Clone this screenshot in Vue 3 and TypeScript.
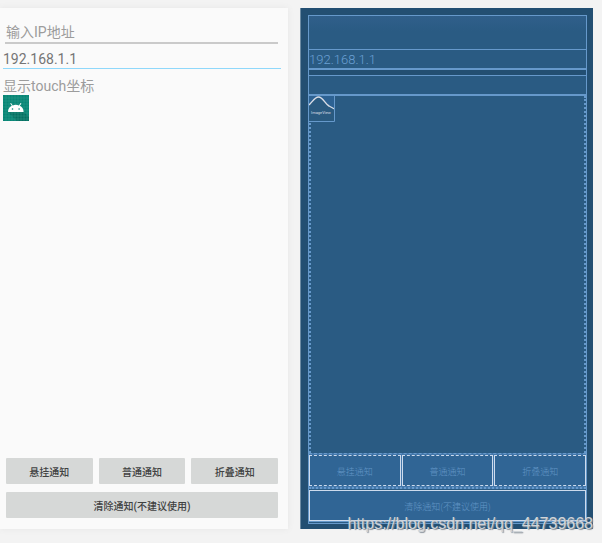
<script setup lang="ts">
import { ref } from 'vue'

const hint = ref('')
const address = ref('192.168.1.1')
const notices: string[] = ['悬挂通知', '普通通知', '折叠通知']
const clearLabel = '清除通知(不建议使用)'
const gridLines: number[] = [3, 6, 9, 12, 15, 18, 21, 24]
</script>

<template>
  <main class="editor">
    <section class="design" aria-label="Design">
      <input v-model="hint" class="field hint" type="text" placeholder="输入IP地址" aria-label="输入IP地址" />
      <input v-model="address" class="field address" type="text" aria-label="IP" />
      <p class="coords">显示touch坐标</p>
      <svg class="launcher" viewBox="0 0 26 26" aria-hidden="true">
        <rect width="26" height="26" fill="#078575" />
        <path d="M5 17 H20.500 L26 22 V26 H14 Z" fill="#04685b" opacity="0.750" />
        <g stroke="#39a091" stroke-width="0.400">
          <path v-for="n in gridLines" :key="n" :d="`M${n} 0V26M0 ${n}H26`" />
        </g>
        <path d="M5 17 C5 13.800 6.600 11.800 8.800 10.800 L7.200 8.500 L8 8 L9.700 10.400 Q12.800 9.300 15.900 10.400 L17.600 8 L18.400 8.500 L16.800 10.800 C19 11.800 20.600 13.800 20.600 17 Z" fill="#fff" />
        <circle cx="9.500" cy="14" r="0.800" fill="#078575" />
        <circle cx="16.100" cy="14" r="0.800" fill="#078575" />
      </svg>
      <div class="actions">
        <div class="trio">
          <button v-for="label in notices" :key="label" type="button">{{ label }}</button>
        </div>
        <button type="button">{{ clearLabel }}</button>
      </div>
    </section>

    <section class="blueprint" aria-label="Blueprint">
      <div class="frame">
        <div class="box first"></div>
        <div class="box second">192.168.1.1</div>
        <div class="spacer"></div>
        <div class="box third"></div>
        <div class="canvas">
          <svg class="image-view" viewBox="0 0 26 26" role="img" aria-label="ImageView">
            <rect width="26" height="26" fill="#2d6293" />
            <path d="M0 9 C4 5 6 1 9.500 1 C14 1 16 8 20 10 L25.500 13 V26 H0 Z" fill="#2a5a80" />
            <path d="M0 9 C4 5 6 1 9.500 1 C14 1 16 8 20 10 L25.500 13" fill="none" stroke="#d9dde5" stroke-width="1.400" />
            <text x="12" y="18" text-anchor="middle">ImageView</text>
            <path d="M25.500 0V25.500H0" fill="none" stroke="#6699cb" />
          </svg>
        </div>
        <div class="outline-trio">
          <div v-for="label in notices" :key="label" class="outline">{{ label }}</div>
        </div>
        <div class="outline wide">{{ clearLabel }}</div>
      </div>
    </section>
    <span class="watermark">https://blog.csdn.net/qq_44739668</span>
  </main>
</template>

<style>
body {
  background: #f3f3f3;
}
</style>

<style scoped>
* {
  box-sizing: border-box;
}
.editor {
  position: relative;
  display: grid;
  grid-template-columns: 288fr 293fr;
  gap: 12px;
  min-height: 100vh;
  padding: 8px 9px 14px 0;
  font-family: Roboto, "Noto Sans CJK SC", sans-serif;
}
.design {
  display: flex;
  flex-direction: column;
  padding: 12px 7px 11px 3px;
  background: #fafafa;
  box-shadow: 0 0 6px #e6e6e6;
}
.field {
  border: 0;
  border-radius: 0;
  outline: 0;
  padding: 0;
  background: transparent;
  font-family: inherit;
  font-size: 14px;
  color: #757575;
}
.hint {
  height: 24px;
  margin: 0 3px 0 2px;
  padding: 2px 1px 0;
  border-bottom: 2px solid #cacaca;
}
.hint::placeholder {
  color: #9c9c9c;
  opacity: 1;
}
.address {
  height: 25px;
  padding-top: 5px;
  border-bottom: 1px solid #8fd8fb;
}
.coords {
  margin: 8px 0 0;
  font-size: 14px;
  line-height: 18px;
  color: #9c9c9c;
}
.launcher {
  width: 26px;
  height: 26px;
}
.actions {
  display: flex;
  flex-direction: column;
  gap: 8px;
  margin: auto 3px 0;
}
.trio {
  display: grid;
  grid-template-columns: repeat(3, 1fr);
  gap: 6px;
}
button {
  height: 26px;
  padding: 0;
  border: 0;
  border-radius: 1px;
  background: #d6d8d7;
  color: #404141;
  font-family: inherit;
  font-size: 10px;
  font-weight: 500;
}
.blueprint {
  display: flex;
  padding: 7px 6px 5px 7px;
  background: #234f72;
  border-left: 1px solid #6d8ba3;
}
.frame {
  display: flex;
  flex: 1;
  flex-direction: column;
  border: 1px solid #6699cb;
  border-bottom: 3px double #6699cb;
  background: #2a5b83;
  color: #6ba0d4;
}
.box {
  border-bottom: 1px solid #6699cb;
}
.first {
  height: 34px;
  background: linear-gradient(#305f8b, #2a5b83 45%);
}
.second {
  height: 20px;
  border-bottom-width: 2px;
  font-size: 13px;
  font-weight: 300;
  line-height: 19px;
}
.spacer {
  height: 5px;
  background: #234f72;
}
.third {
  height: 21px;
  border-top: 1px solid #6699cb;
  border-bottom-width: 2px;
}
.canvas {
  flex: 1;
  border: 0 dotted #6699cb;
  border-width: 0 2px;
}
.image-view {
  display: block;
  width: 26px;
  height: 26px;
  margin-left: -2px;
}
.image-view text {
  fill: #d9dde5;
  font-size: 4px;
}
.outline-trio {
  display: grid;
  grid-template-columns: repeat(3, 1fr);
  gap: 1px;
  padding: 1px 0;
  border-top: 1px dashed #6699cb;
  border-bottom: 2px dotted #6699cb;
  background: #4478ab;
}
.outline {
  display: flex;
  align-items: center;
  justify-content: center;
  height: 31px;
  padding-top: 2px;
  border: 1px solid #cddbed;
  border-top-style: dashed;
  border-bottom-style: dashed;
  background: #306595;
  color: #6295c5;
  font-family: "Noto Sans CJK SC", sans-serif;
  font-size: 9px;
  font-weight: 300;
}
.wide {
  margin-top: 1px;
  border-style: solid;
}
.watermark {
  position: absolute;
  right: 9px;
  bottom: 9px;
  color: #d0d4d8;
  font-family: "Liberation Sans", sans-serif;
  font-size: 16px;
  line-height: 20px;
  text-shadow: 1px 1px 1px #88919a;
}
</style>
